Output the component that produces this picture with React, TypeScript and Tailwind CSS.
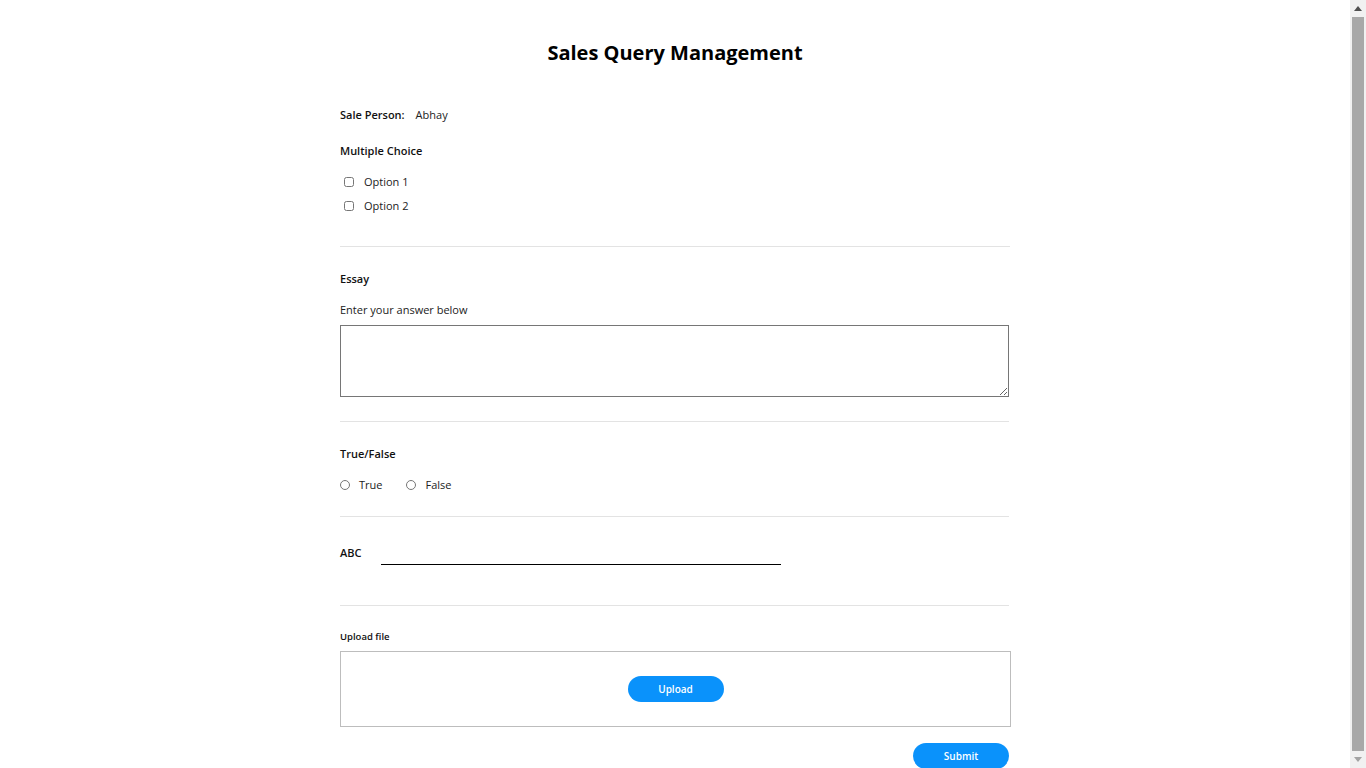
import React from "react";

function FakeScrollbar() {
  return (
    <div className="sticky top-0 flex h-[768px] w-[16px] shrink-0 flex-col bg-[#f1f1f1]">
      <div className="flex h-[17px] items-center justify-center">
        <svg width="8" height="5" viewBox="0 0 8 5">
          <path d="M4 0 L8 5 L0 5 Z" fill="#505050" />
        </svg>
      </div>
      <div className="mx-[2px] flex-1 bg-[#a8a8a8]" />
      <div className="flex h-[17px] items-center justify-center">
        <svg width="8" height="5" viewBox="0 0 8 5">
          <path d="M0 0 L8 0 L4 5 Z" fill="#a3a3a3" />
        </svg>
      </div>
    </div>
  );
}

export default function App() {
  return (
    <div
      className="flex items-start bg-white text-black"
      style={{ fontFamily: '"Open Sans", "Noto Sans", sans-serif' }}
    >
      <div className="min-w-0 flex-1">
        <div className="mx-auto w-[670px] pb-[4px]">
          <h1 className="pt-[39px] text-center text-[20px] font-bold leading-[28px]">
            Sales Query Management
          </h1>

          <div className="mt-[40px] flex items-center text-[11px] leading-[16px]">
            <span className="font-semibold text-[#111]">Sale Person:</span>
            <span className="ml-[11px] text-[#222]">Abhay</span>
          </div>

          <div className="mt-[20px] text-[11px] font-semibold leading-[16px] text-[#111]">
            Multiple Choice
          </div>
          <div className="mt-[11px] flex flex-col">
            <label className="flex h-[24px] items-center text-[11px] text-[#222]">
              <input type="checkbox" className="m-0 ml-[4px] h-[10px] w-[10px]" />
              <span className="ml-[10px]">Option 1</span>
            </label>
            <label className="flex h-[24px] items-center text-[11px] text-[#222]">
              <input type="checkbox" className="m-0 ml-[4px] h-[10px] w-[10px]" />
              <span className="ml-[10px]">Option 2</span>
            </label>
          </div>

          <div className="mt-[28px] h-px bg-[#e3e3e3]" />

          <div className="mt-[24px] text-[11px] font-semibold leading-[16px] text-[#111]">Essay</div>
          <div className="mt-[15px] text-[11px] leading-[16px] text-[#222]">
            Enter your answer below
          </div>
          <textarea className="mt-[7px] block h-[72px] w-[669px] resize-y border border-[#767676] bg-white" />

          <div className="mt-[24px] h-px w-[669px] bg-[#e3e3e3]" />

          <div className="mt-[24px] text-[11px] font-semibold leading-[16px] text-[#111]">True/False</div>
          <div className="mt-[15px] flex h-[16px] items-center text-[11px] text-[#222]">
            <label className="flex items-center">
              <input type="radio" name="tf" className="m-0 h-[10px] w-[10px]" />
              <span className="ml-[9px]">True</span>
            </label>
            <label className="ml-[24px] flex items-center">
              <input type="radio" name="tf" className="m-0 h-[10px] w-[10px]" />
              <span className="ml-[9px]">False</span>
            </label>
          </div>

          <div className="mt-[23px] h-px w-[669px] bg-[#e3e3e3]" />

          <div className="mt-[28px] flex items-start">
            <span className="text-[11px] font-semibold leading-[16px] text-[#111]">ABC</span>
            <div className="ml-[19px] h-[20px] w-[400px] border-b border-black" />
          </div>

          <div className="mt-[40px] h-px w-[669px] bg-[#e3e3e3]" />

          <div className="mt-[24px] text-[9.5px] font-semibold leading-[14px] text-[#111]">Upload file</div>
          <div className="mt-[7px] flex h-[76px] w-[671px] items-center justify-center border border-[#bdbdbd]">
            <button className="h-[26px] w-[96px] rounded-full bg-[#0a92fb] text-[10px] font-semibold text-white">
              Upload
            </button>
          </div>

          <div className="mt-[16px] flex w-[669px] justify-end">
            <button className="h-[26px] w-[96px] rounded-full bg-[#0a92fb] text-[10px] font-semibold text-white">
              Submit
            </button>
          </div>
        </div>
      </div>
      <FakeScrollbar />
    </div>
  );
}
